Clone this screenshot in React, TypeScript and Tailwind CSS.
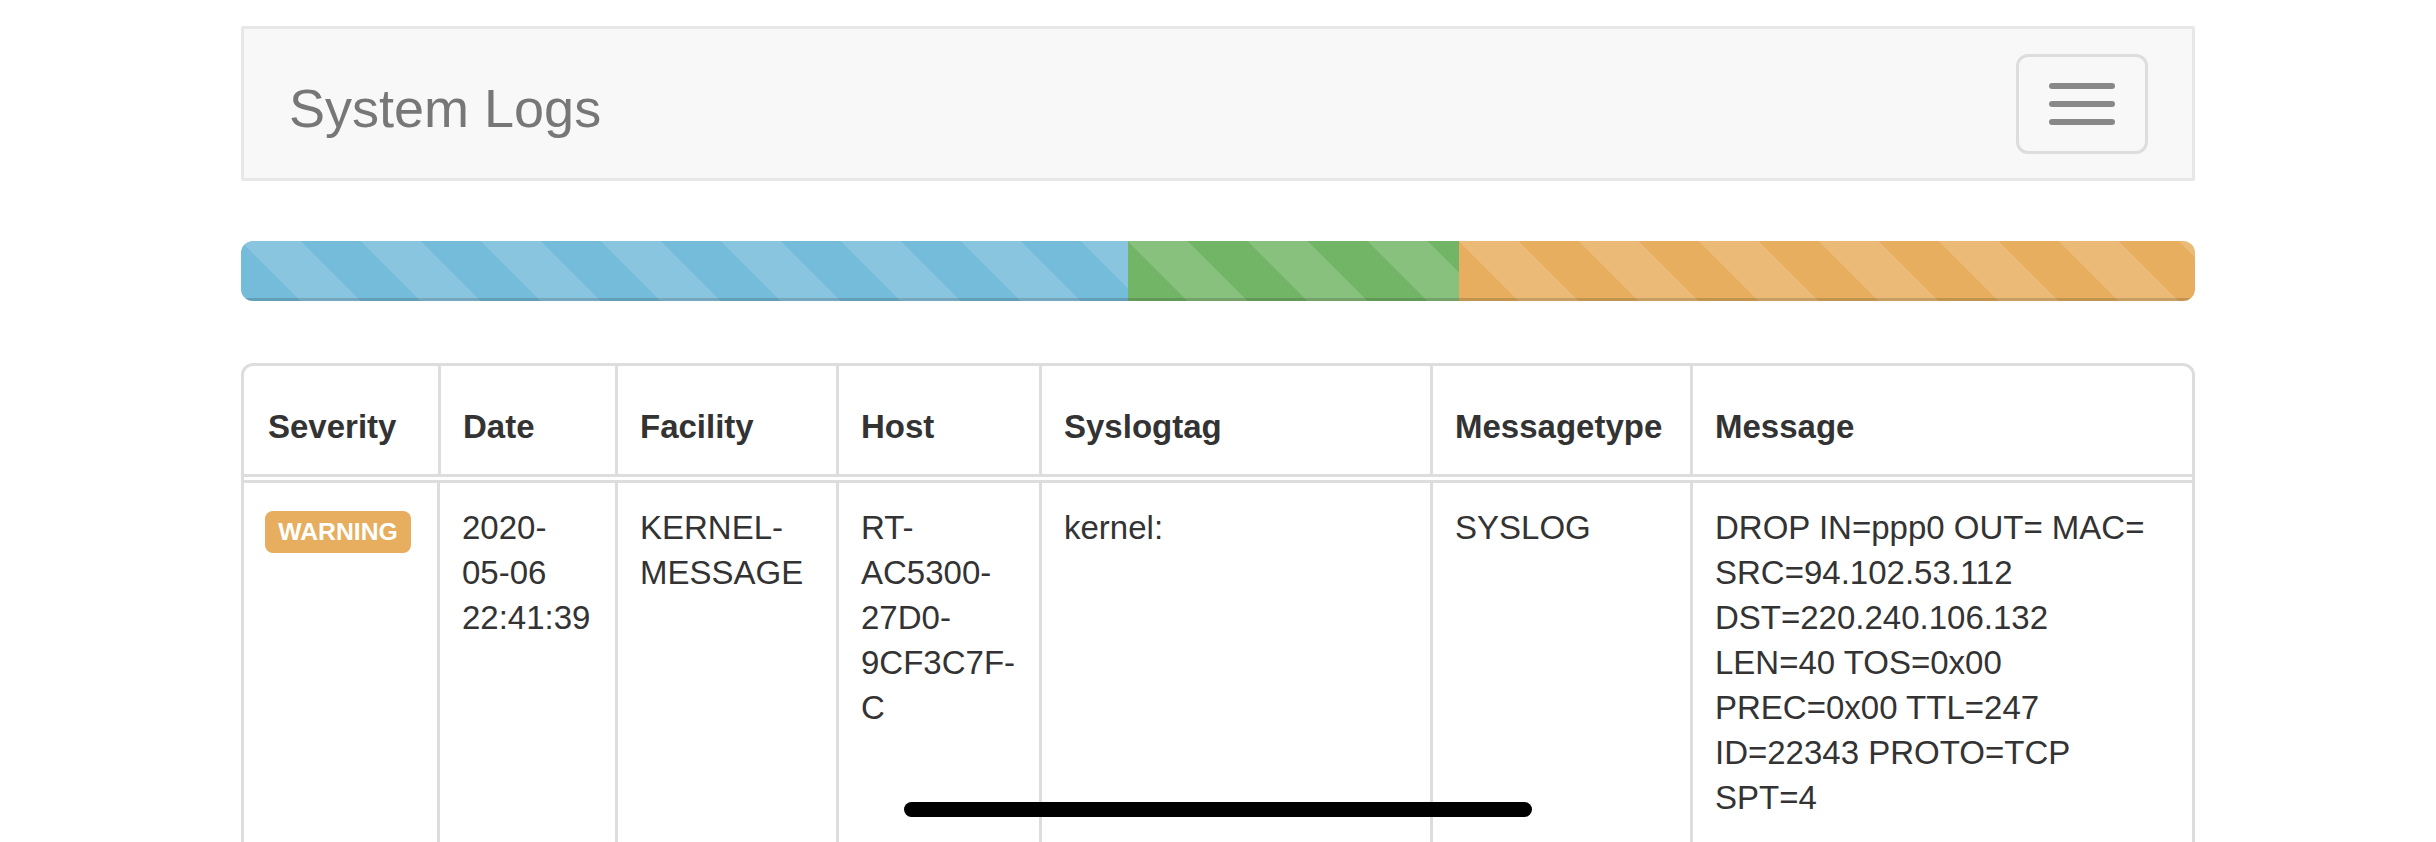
import React from 'react';

const stripes =
  'bg-[linear-gradient(45deg,rgba(255,255,255,0.15)_25%,transparent_25%,transparent_50%,rgba(255,255,255,0.15)_50%,rgba(255,255,255,0.15)_75%,transparent_75%,transparent)] bg-size-[120px_120px] shadow-[inset_0_-3px_0_rgba(0,0,0,0.15)]';

const headers = ['Severity', 'Date', 'Facility', 'Host', 'Syslogtag', 'Messagetype', 'Message'];

const row = {
  date: ['2020-', '05-06', '22:41:39'],
  facility: ['KERNEL-', 'MESSAGE'],
  host: ['RT-', 'AC5300-', '27D0-', '9CF3C7F-', 'C'],
  tag: ['kernel:'],
  type: ['SYSLOG'],
  message: [
    'DROP IN=ppp0 OUT= MAC=',
    'SRC=94.102.53.112',
    'DST=220.240.106.132',
    'LEN=40 TOS=0x00',
    'PREC=0x00 TTL=247',
    'ID=22343 PROTO=TCP',
    'SPT=4',
  ],
};

const Lines: React.FC<{ lines: string[] }> = ({ lines }) => (
  <>
    {lines.map((l, i) => (
      <span key={i} className="block whitespace-nowrap">
        {l}
      </span>
    ))}
  </>
);

const App: React.FC = () => {
  return (
    <div className="relative h-[842px] overflow-hidden bg-white font-['Liberation_Sans',Arial,sans-serif] text-[#333]">
      <div className="px-[241px] pt-[26px]">
        {/* navbar */}
        <div className="flex h-[155px] items-center justify-between rounded-[2px] border-[3px] border-[#e7e7e7] bg-[#f8f8f8]">
          <span className="pl-[45px] pt-[8px] text-[54px] leading-[60px] text-[#777]">System Logs</span>
          <button className="mr-[44px] flex h-[100px] w-[132px] flex-col items-center justify-center gap-[12px] rounded-[12px] border-[3px] border-[#ddd]">
            <span className="block h-[6px] w-[66px] rounded-[3px] bg-[#888]" />
            <span className="block h-[6px] w-[66px] rounded-[3px] bg-[#888]" />
            <span className="block h-[6px] w-[66px] rounded-[3px] bg-[#888]" />
          </button>
        </div>

        {/* progress */}
        <div className="mt-[60px] flex h-[60px] overflow-hidden rounded-[12px] bg-[#f5f5f5]">
          <div className={`h-full w-[887px] bg-[#75bbda] ${stripes}`} />
          <div className={`h-full w-[331px] bg-[#73b566] ${stripes}`} />
          <div className={`h-full flex-1 bg-[#e6ae5e] ${stripes}`} />
        </div>

        {/* table */}
        <div className="mt-[62px] overflow-hidden rounded-[12px] border-[3px] border-[#ddd] text-[33px] leading-[45px]">
          <div className="grid grid-cols-[194px_177px_221px_203px_391px_260px_1fr] border-b-[3px] border-[#ddd]">
            {headers.map((h, i) => (
              <div
                key={h}
                className={`h-[108px] pt-[38px] font-bold ${i === 0 ? 'pl-[24px]' : 'border-l-[3px] border-[#ddd] pl-[22px]'}`}
              >
                {h}
              </div>
            ))}
          </div>
          <div className="h-[3px]" />
          <div className="grid min-h-[420px] grid-cols-[193px_178px_221px_203px_391px_260px_1fr] border-t-[3px] border-[#ddd]">
            <div className="pl-[21px] pt-[22px]">
              <span className="mt-[6px] flex h-[42px] w-[146px] items-center justify-center rounded-[8px] bg-[#e6ae5e] text-[24.75px] font-bold leading-none text-white">
                WARNING
              </span>
            </div>
            <div className="border-l-[3px] border-[#ddd] px-[22px] pt-[22px]">
              <Lines lines={row.date} />
            </div>
            <div className="border-l-[3px] border-[#ddd] px-[22px] pt-[22px]">
              <Lines lines={row.facility} />
            </div>
            <div className="border-l-[3px] border-[#ddd] px-[22px] pt-[22px]">
              <Lines lines={row.host} />
            </div>
            <div className="border-l-[3px] border-[#ddd] px-[22px] pt-[22px]">
              <Lines lines={row.tag} />
            </div>
            <div className="border-l-[3px] border-[#ddd] px-[22px] pt-[22px]">
              <Lines lines={row.type} />
            </div>
            <div className="border-l-[3px] border-[#ddd] px-[22px] pt-[22px]">
              <Lines lines={row.message} />
            </div>
          </div>
        </div>
      </div>

      {/* home indicator */}
      <div className="absolute bottom-[25px] left-1/2 h-[15px] w-[628px] -translate-x-1/2 rounded-full bg-black" />
    </div>
  );
};

export default App;
